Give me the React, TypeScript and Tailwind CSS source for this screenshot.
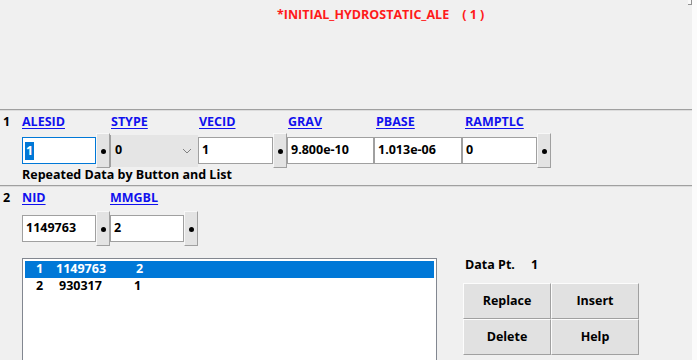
import type { ReactNode } from 'react'

const FONT = "font-['Segoe_UI','Open_Sans','Noto_Sans',sans-serif]"

function Sep() {
  return <div className="h-[2px] shrink-0 border-t border-[#a0a0a0] bg-[#dcdcdc]" />
}

function Label({ children }: { children: ReactNode }) {
  return <div className="h-[18px] text-[12.5px] font-bold leading-[18px] text-[#1010ee] underline underline-offset-2">{children}</div>
}

function Dot() {
  return (
    <div className="w-[14px] h-[35px] shrink-0 bg-[#e3e3e3] border-l border-t border-[#f8f8f8] border-r border-b border-r-[#a0a0a0] border-b-[#a0a0a0] flex items-center justify-center pt-[2px]">
      <span className="w-[5px] h-[5px] rounded-full bg-black" />
    </div>
  )
}

function Input({ w, value, focus }: { w: string; value: string; focus?: boolean }) {
  return (
    <div className={`${w} h-[27px] shrink-0 bg-white border ${focus ? 'border-[#0078d7]' : 'border-[#a0a0a0]'} flex items-center pl-[2px] text-[12.5px] font-bold text-black`}>
      {focus ? <span className="bg-[#0078d7] text-white px-[1px] leading-[18px]">{value}</span> : <span className="pl-[1px]">{value}</span>}
    </div>
  )
}

export default function App() {
  return (
    <div className={`w-[697px] h-[360px] overflow-hidden bg-[#f0f0f0] flex ${FONT}`}>
      <div className="w-[692px] flex flex-col shrink-0">
        <div className="h-[109px] shrink-0 pl-[277px] pt-[6px] text-[12.5px] font-bold text-[#ff1a1a] whitespace-pre">*INITIAL_HYDROSTATIC_ALE    ( 1 )</div>
        <Sep />

        <div className="flex shrink-0 pt-[2px]">
          <div className="w-[22px] pl-[3px] text-[12.5px] font-bold leading-[18px]">1</div>
          <div className="flex flex-col">
            <div className="flex items-end">
              <div className="flex flex-col">
                <Label>ALESID</Label>
                <div className="flex items-center mt-[2px]">
                  <Input w="w-[74px]" value="1" focus />
                  <Dot />
                </div>
              </div>
              <div className="flex flex-col">
                <div className="pl-[1px]"><Label>STYPE</Label></div>
                <div className="flex items-center mt-[2px] h-[35px]">
                  <div className="w-[88px] h-[32px] bg-[#e5e5e5] border-l border-[#a0a0a0] flex items-center pl-[4px] pr-[6px] text-[12.5px] font-bold">
                    <span className="flex-1">0</span>
                    <svg width="10" height="6" viewBox="0 0 10 6" fill="none" stroke="#808080" strokeWidth="1"><path d="M1 1l4 4 4-4" /></svg>
                  </div>
                </div>
              </div>
              <div className="flex flex-col">
                <div className="pl-[1px]"><Label>VECID</Label></div>
                <div className="flex items-center mt-[2px]">
                  <Input w="w-[75px]" value="1" />
                  <Dot />
                </div>
              </div>
              <div className="flex flex-col">
                <div className="pl-[1px]"><Label>GRAV</Label></div>
                <div className="flex items-center mt-[2px] h-[35px]">
                  <Input w="w-[87px]" value="9.800e-10" />
                </div>
              </div>
              <div className="flex flex-col">
                <div className="pl-[2px]"><Label>PBASE</Label></div>
                <div className="flex items-center mt-[2px] h-[35px]">
                  <Input w="w-[88px]" value="1.013e-06" />
                </div>
              </div>
              <div className="flex flex-col">
                <div className="pl-[3px]"><Label>RAMPTLC</Label></div>
                <div className="flex items-center mt-[2px]">
                  <Input w="w-[75px]" value="0" />
                  <Dot />
                </div>
              </div>
            </div>
            <div className="h-[17px] text-[12.5px] font-bold leading-[13px] text-black">Repeated Data by Button and List</div>
          </div>
        </div>
        <Sep />

        <div className="flex shrink-0 pt-[2px]">
          <div className="w-[22px] pl-[3px] text-[12.5px] font-bold leading-[18px]">2</div>
          <div className="flex flex-col">
            <div className="flex">
              <div className="flex flex-col">
                <Label>NID</Label>
                <div className="flex items-center mt-[4px]">
                  <Input w="w-[74px]" value="1149763" />
                  <Dot />
                </div>
              </div>
              <div className="flex flex-col">
                <Label>MMGBL</Label>
                <div className="flex items-center mt-[4px]">
                  <Input w="w-[74px]" value="2" />
                  <Dot />
                </div>
              </div>
            </div>
            <div className="flex mt-[12px]">
              <div className="w-[415px] h-[110px] shrink-0 bg-white border border-[#828790] p-[2px] text-[12.5px] font-bold">
                <div className="h-[17px] bg-[#0078d7] text-white flex items-center">
                  <span className="w-[31px] pl-[11px]">1</span>
                  <span className="w-[80px]">1149763</span>
                  <span>2</span>
                </div>
                <div className="h-[16px] text-black flex items-center">
                  <span className="w-[34px] pl-[11px]">2</span>
                  <span className="w-[75px]">930317</span>
                  <span>1</span>
                </div>
              </div>
              <div className="ml-[26px] flex flex-col">
                <div className="h-[16px] mt-[-1px] pl-[2px] text-[12.5px] font-bold leading-[16px] whitespace-pre">Data Pt.     1</div>
                <div className="mt-[10px] grid grid-cols-[88px_88px] grid-rows-[36px_36px] text-[12.5px] font-bold">
                  {['Replace', 'Insert', 'Delete', 'Help'].map((b) => (
                    <div key={b} className="bg-[#e1e1e1] border border-t-[#fcfcfc] border-l-[#fcfcfc] border-r-[#a0a0a0] border-b-[#a0a0a0] flex items-center justify-center">{b}</div>
                  ))}
                </div>
              </div>
            </div>
          </div>
        </div>
      </div>
      <div className="flex-1 bg-[#fbfbfb] relative">
        <div className="absolute left-[-4px] top-0 w-[4px] h-[5px] bg-[#f8f8f8] border-r border-b border-[#909090]" />
      </div>
    </div>
  )
}
